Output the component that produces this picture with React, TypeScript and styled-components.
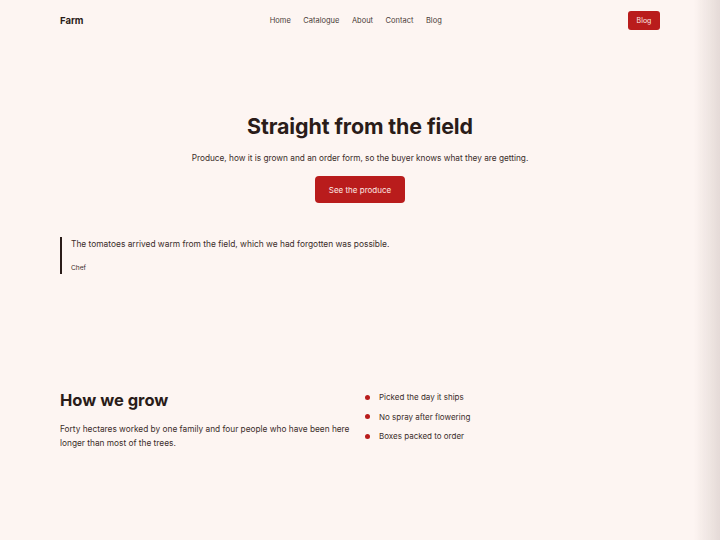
import styled, { createGlobalStyle } from 'styled-components';

const GlobalStyle = createGlobalStyle`
  html, body {
    margin: 0;
    padding: 0;
    background: #fdf5f2;
  }

  body {
    font-family: Inter, "Noto Sans", "Liberation Sans", sans-serif;
    color: #2a1c19;
  }
`;

const StyledPage = styled.div`
  position: relative;
  min-height: 540px;
  background: #fdf5f2;
  overflow: hidden;
`;

const StyledEdgeShade = styled.div`
  position: fixed;
  top: 0;
  right: 0;
  bottom: 0;
  width: 26px;
  pointer-events: none;
  background: linear-gradient(to right, rgba(120, 100, 95, 0), rgba(120, 100, 95, 0.18));
`;

const StyledHeader = styled.header`
  display: flex;
  justify-content: space-between;
  align-items: center;
  height: 41px;
  padding: 0 60px;
`;

const StyledLogo = styled.div`
  font-size: 9.5px;
  font-weight: 700;
  color: #2a1c19;
`;

const StyledNav = styled.nav`
  display: flex;
  gap: 12.5px;
  font-size: 7.5px;
  color: #4a3b38;
`;

const StyledNavLink = styled.a`
  color: inherit;
  text-decoration: none;
`;

const StyledSmallButton = styled.a`
  display: flex;
  align-items: center;
  justify-content: center;
  width: 32px;
  height: 19px;
  border-radius: 3px;
  background: #b91c1c;
  color: #fde8e4;
  font-size: 7px;
  text-decoration: none;
`;

const StyledHero = styled.section`
  display: flex;
  flex-direction: column;
  align-items: center;
  padding-top: 72px;
`;

const StyledTitle = styled.h1`
  margin: 0;
  font-size: 21.4px;
  font-weight: 700;
  letter-spacing: -0.1px;
  color: #2a1c19;
`;

const StyledLead = styled.p`
  margin: 14px 0 0;
  font-size: 8.25px;
  color: #3b2d2a;
`;

const StyledButton = styled.a`
  display: flex;
  align-items: center;
  justify-content: center;
  margin-top: 13px;
  width: 90px;
  height: 27px;
  border-radius: 4px;
  background: #b91c1c;
  color: #fde8e4;
  font-size: 8px;
  text-decoration: none;
`;

const StyledQuote = styled.blockquote`
  margin: 34px 60px 0;
  padding: 2px 0 2px 9px;
  border-left: 2px solid #2a1c19;
`;

const StyledQuoteText = styled.p`
  margin: 0;
  font-size: 8.4px;
  color: #3b2d2a;
`;

const StyledCite = styled.cite`
  display: block;
  margin-top: 15px;
  font-size: 6.6px;
  font-style: normal;
  color: #3b2d2a;
`;

const StyledFeatures = styled.section`
  display: grid;
  grid-template-columns: 1fr 1fr;
  margin: 116px 60px 0;
`;

const StyledSectionTitle = styled.h2`
  margin: 0;
  font-size: 16.5px;
  font-weight: 700;
  color: #2a1c19;
`;

const StyledText = styled.p`
  margin: 12px 0 0;
  max-width: 300px;
  font-size: 8.3px;
  line-height: 14px;
  color: #3b2d2a;
`;

const StyledList = styled.ul`
  display: flex;
  flex-direction: column;
  gap: 7px;
  margin: 0;
  padding: 1px 0 0 5px;
  list-style: none;
`;

const StyledItem = styled.li`
  display: flex;
  align-items: center;
  gap: 9px;
  height: 12.5px;
  font-size: 8px;
  color: #3b2d2a;

  &::before {
    content: '';
    width: 5px;
    height: 5px;
    border-radius: 50%;
    background: #b91c1c;
  }
`;

const links = ['Home', 'Catalogue', 'About', 'Contact', 'Blog'];
const points = ['Picked the day it ships', 'No spray after flowering', 'Boxes packed to order'];

export default function App() {
  return (
    <StyledPage>
      <GlobalStyle />
      <StyledHeader>
        <StyledLogo>Farm</StyledLogo>
        <StyledNav>
          {links.map((link) => (
            <StyledNavLink key={link} href='#'>
              {link}
            </StyledNavLink>
          ))}
        </StyledNav>
        <StyledSmallButton href='#'>Blog</StyledSmallButton>
      </StyledHeader>

      <StyledHero>
        <StyledTitle>Straight from the field</StyledTitle>
        <StyledLead>
          Produce, how it is grown and an order form, so the buyer knows what they are getting.
        </StyledLead>
        <StyledButton href='#'>See the produce</StyledButton>
      </StyledHero>

      <StyledQuote>
        <StyledQuoteText>
          The tomatoes arrived warm from the field, which we had forgotten was possible.
        </StyledQuoteText>
        <StyledCite>Chef</StyledCite>
      </StyledQuote>

      <StyledFeatures>
        <div>
          <StyledSectionTitle>How we grow</StyledSectionTitle>
          <StyledText>
            Forty hectares worked by one family and four people who have been here longer than
            most of the trees.
          </StyledText>
        </div>
        <StyledList>
          {points.map((point) => (
            <StyledItem key={point}>{point}</StyledItem>
          ))}
        </StyledList>
      </StyledFeatures>

      <StyledEdgeShade />
    </StyledPage>
  );
}
